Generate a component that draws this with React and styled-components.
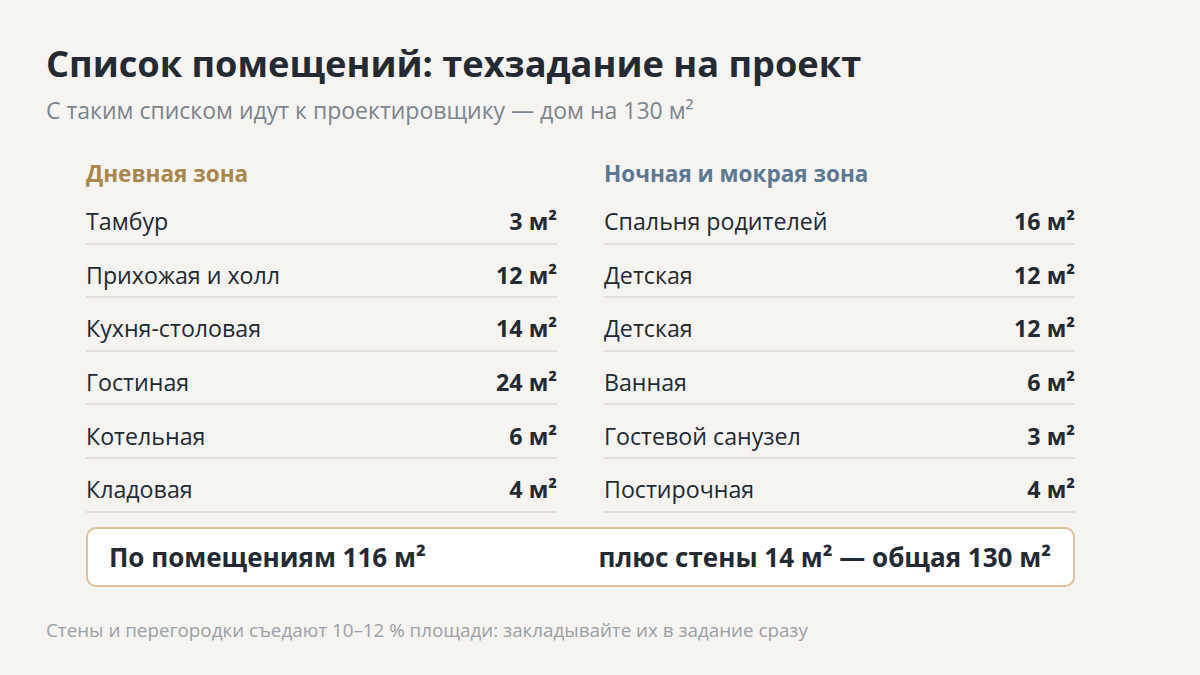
import styled, { createGlobalStyle } from 'styled-components';

const GlobalStyle = createGlobalStyle`
  body {
    margin: 0;
    background: #f6f4f0;
    font-family: 'Open Sans', 'Noto Sans', sans-serif;
  }
`;

const dayRooms = [
  ['Тамбур', 3],
  ['Прихожая и холл', 12],
  ['Кухня-столовая', 14],
  ['Гостиная', 24],
  ['Котельная', 6],
  ['Кладовая', 4],
];

const nightRooms = [
  ['Спальня родителей', 16],
  ['Детская', 12],
  ['Детская', 12],
  ['Ванная', 6],
  ['Гостевой санузел', 3],
  ['Постирочная', 4],
];

const App = () => (
  <Page>
    <GlobalStyle />
    <Title>Список помещений: техзадание на проект</Title>
    <Subtitle>С таким списком идут к проектировщику — дом на 130 м²</Subtitle>
    <Content>
      <Columns>
        <Zone title="Дневная зона" color="#a8864c" rooms={dayRooms} />
        <Zone title="Ночная и мокрая зона" color="#5d7893" rooms={nightRooms} />
      </Columns>
      <Total>
        <span>По помещениям 116 м²</span>
        <span>плюс стены 14 м² — общая 130 м²</span>
      </Total>
    </Content>
    <Note>Стены и перегородки съедают 10–12 % площади: закладывайте их в задание сразу</Note>
  </Page>
);

const Zone = ({ title, color, rooms }) => (
  <Column>
    <ZoneTitle color={color}>{title}</ZoneTitle>
    {rooms.map(([name, area], i) => (
      <Row key={i}>
        <span>{name}</span>
        <Area>{area} м²</Area>
      </Row>
    ))}
  </Column>
);

const Page = styled.div`
  width: 1200px;
  height: 675px;
  box-sizing: border-box;
  padding: 38px 46px 0;
  color: #222a34;
`;

const Title = styled.h1`
  margin: 0;
  font-size: 36.2px;
  font-weight: 700;
  line-height: 50px;
  color: #232a33;
`;

const Subtitle = styled.div`
  margin-top: 7px;
  font-size: 23px;
  line-height: 30px;
  color: #7b858f;
`;

const Content = styled.div`
  margin: 34px 79px 0 40px;
`;

const Columns = styled.div`
  display: grid;
  grid-template-columns: 1fr 1fr;
  column-gap: 47px;
`;

const Column = styled.div`
  display: flex;
  flex-direction: column;
`;

const ZoneTitle = styled.div`
  font-size: 22.5px;
  font-weight: 700;
  line-height: 30px;
  color: ${props => props.color};
  margin-bottom: 2px;
`;

const Row = styled.div`
  display: flex;
  justify-content: space-between;
  align-items: center;
  box-sizing: border-box;
  height: 53.6px;
  padding-top: 9px;
  border-bottom: 2px solid #e3e0da;
  font-size: 23.2px;
  color: #222a34;
`;

const Area = styled.span`
  font-weight: 700;
`;

const Total = styled.div`
  margin-top: 14.5px;
  height: 60px;
  box-sizing: border-box;
  border: 2px solid #dcc19b;
  border-radius: 10px;
  background: #fff;
  display: flex;
  align-items: center;
  justify-content: space-between;
  padding: 0 22px 0 21px;
  font-size: 26px;
  font-weight: 700;
  color: #222a34;
`;

const Note = styled.div`
  margin-top: 30px;
  font-size: 18.8px;
  line-height: 26px;
  color: #99a0a7;
`;

export default App;
